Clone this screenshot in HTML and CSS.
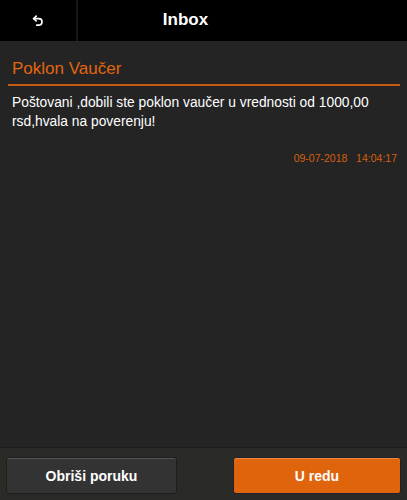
FILE: index.html
```html
<!DOCTYPE html>
<html lang="sr">
    <head>
        <title>Inbox</title>
        <meta charset="utf-8" />
        <link rel="stylesheet" href="styles.css">
    </head>
    <body>
        <div class="page">
            <div class="topbar">
                <div class="back">
                    <svg width="12" height="12" viewBox="0 0 12 12">
                        <path d="M4.2 1.2 L1.6 3.6 L4.2 6" fill="none" stroke="#fff" stroke-width="1.7" stroke-linecap="round" stroke-linejoin="round"/>
                        <path d="M2 3.6 H6.5 C8.9 3.6 10 5 10 6.8 C10 8.8 8.6 10.2 6.4 10.2 H4.8" fill="none" stroke="#fff" stroke-width="1.7" stroke-linecap="round"/>
                    </svg>
                </div>
                <div class="title">Inbox</div>
            </div>

            <div class="message">
                <div class="subject">Poklon Vaučer</div>
                <div class="text">Poštovani ,dobili ste poklon vaučer u vrednosti od 1000,00 rsd,hvala na poverenju!</div>
                <div class="stamp">09-07-2018&nbsp;&nbsp;&nbsp;14:04:17</div>
            </div>

            <div class="footer">
                <button class="btn btnDelete">Obriši poruku</button>
                <button class="btn btnOk">U redu</button>
            </div>
        </div>
    </body>
</html>
```
FILE: styles.css
```css
body {
    margin: 0;
    padding: 0;
    background-color: #242424;
    font-family: "Liberation Sans", Arial, sans-serif;
    color: #fff;
}
.page {
    display: flex;
    flex-direction: column;
    height: 100vh;
}

/* top bar */
.topbar {
    display: flex;
    height: 41px;
    background-color: #000;
}
.back {
    width: 78px;
    display: flex;
    align-items: center;
    justify-content: center;
    border-right: 2px solid #161616;
    box-sizing: border-box;
}
.title {
    width: 215px;
    text-align: center;
    line-height: 39px;
    font-size: 17px;
    font-weight: bold;
}

/* message */
.message {
    flex: 1;
    padding: 18px 7px 0 8px;
}
.subject {
    color: #e2660f;
    font-size: 17px;
    padding: 0 0 5px 4px;
    border-bottom: 2px solid #c65a12;
}
.text {
    font-size: 13.8px;
    line-height: 19px;
    padding: 7px 0 0 4px;
}
.stamp {
    color: #d4600f;
    font-size: 10.5px;
    text-align: right;
    padding: 21px 3px 0 0;
}

/* footer */
.footer {
    height: 53px;
    box-sizing: border-box;
    display: flex;
    justify-content: space-between;
    padding: 9px 6px 0 6px;
    background-color: #2a2a27;
    border-top: 1px solid #1c1c1c;
}
.btn {
    height: 37px;
    border-radius: 3px;
    font-family: "Liberation Sans", Arial, sans-serif;
    font-size: 14px;
    font-weight: bold;
    color: #fff;
    cursor: pointer;
}
.btnDelete {
    width: 171px;
    background-color: #333;
    border: 1px solid #1e1e1e;
    box-shadow: inset 0 1px 0 #555;
}
.btnOk {
    width: 168px;
    background-color: #e0640c;
    border: 1px solid #1e2230;
    box-shadow: inset 0 1px 0 #f08a3c;
}
```
